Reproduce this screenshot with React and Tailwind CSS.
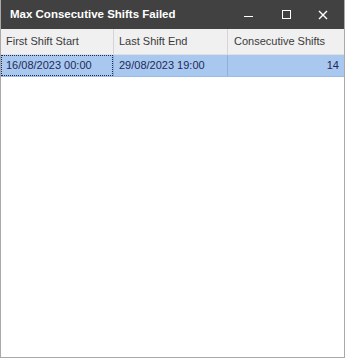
import React from 'react'

const rows = [{ start: '16/08/2023 00:00', end: '29/08/2023 19:00', count: 14 }]

export default function App() {
  return (
    <div className="w-[345px] h-[358px] flex flex-col bg-white border border-t-0 border-[#a9a9a9] overflow-hidden" style={{ fontFamily: '"Liberation Sans", Arial, sans-serif' }}>
      {/* title bar */}
      <div className="h-[29px] shrink-0 bg-[#414141] flex items-center -mx-px">
        <div className="pl-[10px] text-white font-bold text-[11.5px] flex-1">Max Consecutive Shifts Failed</div>
        <div className="flex items-center h-full">
          <div className="w-[38px] h-full flex items-center justify-center">
            <div className="w-[9px] h-px bg-white mt-[3px]" />
          </div>
          <div className="w-[38px] h-full flex items-center justify-center">
            <div className="w-[9px] h-[9px] border border-white" />
          </div>
          <div className="w-[40px] h-full flex items-center justify-center pr-[4px]">
            <svg width="10" height="10" viewBox="0 0 10 10">
              <path d="M1 1L9 9M9 1L1 9" stroke="white" strokeWidth="1.4" />
            </svg>
          </div>
        </div>
      </div>

      {/* grid header */}
      <div className="flex h-[26px] shrink-0 bg-[#f0f0f0] text-[11px] text-[#3a3a3a] border-b border-[#e0e0e0]">
        <div className="w-[113px] border-r border-[#d5d5d5] flex items-center pl-[5px]">First Shift Start</div>
        <div className="w-[114px] border-r border-[#d5d5d5] flex items-center pl-[5px]">Last Shift End</div>
        <div className="flex-1 flex items-center pl-[6px]">Consecutive Shifts</div>
      </div>

      {rows.map((r, i) => (
        <div key={i} className="flex h-[22px] shrink-0 bg-[#a9c8ef] text-[11px] text-[#1e2a5a] border-b border-[#9bbbe4]">
          <div className="w-[113px] border-r border-[#8fb0db] flex items-center">
            <div className="w-full h-full border border-dotted border-[#1c2c55] flex items-center pl-[4px]">{r.start}</div>
          </div>
          <div className="w-[114px] border-r border-[#8fb0db] flex items-center pl-[5px]">{r.end}</div>
          <div className="flex-1 flex items-center justify-end pr-[5px]">{r.count}</div>
        </div>
      ))}
      <div className="flex-1" />
    </div>
  )
}
